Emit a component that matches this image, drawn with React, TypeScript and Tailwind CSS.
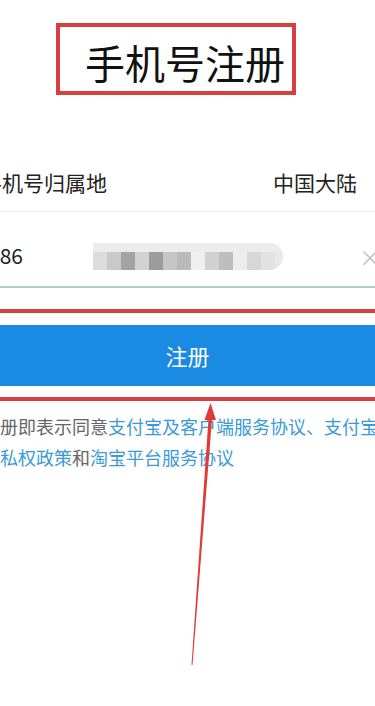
const mosaic = [
  "#dcdcdc",
  "#c9c9c9",
  "#a3a3a3",
  "#d2d2d2",
  "#9c9c9c",
  "#c6c6c6",
  "#bababa",
  "#efefef",
  "#d1d1d1",
  "#bebebe",
  "#ededed",
  "#d7d7d7",
  "#e2e2e2",
];

const App = () => {
  return (
    <div className="relative h-[706px] w-[375px] overflow-hidden bg-white font-['Noto_Sans_CJK_SC',sans-serif]">
      {/* title */}
      <div className="pt-[23px]">
        <div className="ml-[56px] flex h-[72px] w-[240px] items-center border-4 border-[#d8403f] pl-[25px] pt-[5px] text-[40px] leading-none text-[#111]">
          手机号注册
        </div>
      </div>

      {/* region row */}
      <div className="mt-[60px] flex h-[57px] items-center justify-between border-b border-[#ececec] pr-[18px] text-[21px] text-[#222]">
        <span className="-ml-[19px]">手机号归属地</span>
        <span>中国大陆</span>
      </div>

      {/* phone row */}
      <div className="flex h-[74px] items-center pt-[14px] text-[#222]">
        <span className="-ml-[12px] w-[105px] text-[21px]">+86</span>
        <div className="flex h-[27px] w-[190px] flex-col overflow-hidden rounded-r-[14px] bg-[#e9e9e9]">
          <div className="h-[9px] bg-[#ececec]" />
          <div className="flex h-[18px]">
            {mosaic.map((c, i) => (
              <div key={i} className="h-full w-[14px]" style={{ backgroundColor: c }} />
            ))}
          </div>
        </div>
        <span className="ml-auto -mr-[6px] text-[22px] text-[#c4c4c4]">×</span>
      </div>
      <div className="h-[2px] bg-[#aecbd2]" />

      {/* button */}
      <div className="mt-[21px] border-y-4 border-[#d8403f] pt-[12px] pb-[11px]">
        <button className="flex h-[61px] w-full items-center justify-center bg-[#1b8ae3] text-[22px] text-white">
          注册
        </button>
      </div>

      {/* agreement */}
      <p className="mt-[10px] -ml-[18px] w-[400px] text-[18px] leading-[31px] text-[#666]">
        注册即表示同意<span className="text-[#3a9ad6]">支付宝及客户端服务协议、支付宝隐私权政策</span>和
        <span className="text-[#3a9ad6]">淘宝平台服务协议</span>
      </p>

      {/* arrow */}
      <svg className="pointer-events-none absolute left-0 top-0" width="375" height="706" viewBox="0 0 375 706">
        <polygon points="191.5,665 192.5,665 212,419 208.5,419" fill="#e03a3a" />
        <polygon points="210.5,403 216,420 204.5,420" fill="#e03a3a" />
      </svg>
    </div>
  );
};

export default App;
